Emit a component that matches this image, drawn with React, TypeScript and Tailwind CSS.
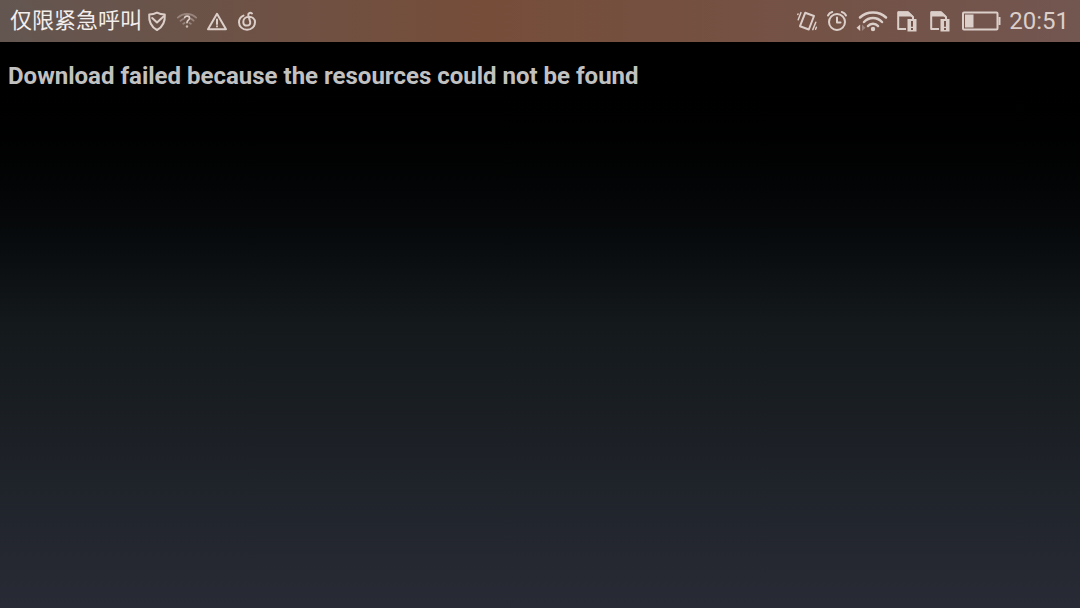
import type { ReactNode } from 'react';

interface GlyphProps {
    label:     string;
    width:     number;
    className?: string;
    children:  ReactNode;
}

// Every status glyph is drawn on a 24px high canvas so they share one baseline.
function Glyph({ label, width, className, children }: GlyphProps) {
    return (
        <svg
            role="img"
            aria-label={label}
            width={width}
            height={24}
            viewBox={`0 0 ${width} 24`}
            fill="none"
            stroke="currentColor"
            strokeWidth={2}
            strokeLinecap="round"
            strokeLinejoin="round"
            className={`shrink-0 ${className ?? ''}`}
        >
            {children}
        </svg>
    );
}

function ShieldGlyph() {
    return (
        <Glyph label="Protection" width={22}>
            <path d="M11 3.6C8.5 4.9 6 5.4 3.2 5.5C2.7 12.500 5 17.800 11 21C17 17.800 19.300 12.500 18.800 5.500C16 5.400 13.500 4.900 11 3.600Z" />
            <path d="M6.200 9L11 13.500L17.800 7.200" />
        </Glyph>
    );
}

function UnknownWifiGlyph() {
    return (
        <Glyph label="Unknown network" width={22}>
            <g opacity={0.4} strokeWidth={1.8}>
                <path d="M1.800 8.600C4.300 6.300 7.500 5 11 5C14.500 5 17.700 6.300 20.200 8.600" />
                <path d="M4.500 11.800C5.700 10.700 6.800 10 8 9.600M14.500 9.600C15.700 10 16.600 10.700 17.600 11.700" />
                <path d="M7.300 14.800L8.600 13.900M14.800 14.800L13.400 13.900" />
            </g>
            <path d="M8.700 8.500C9.200 6.600 13.600 6.600 13.500 9.200C13.400 11.200 11 11.200 11 13.600" strokeWidth={1.7} />
            <circle cx="11" cy="17.500" r="1.200" fill="currentColor" stroke="none" opacity={0.8} />
        </Glyph>
    );
}

function WarningGlyph() {
    return (
        <Glyph label="Warning" width={22}>
            <path d="M11 4.800L20 20.200H2Z" />
            <path d="M11 10.500V15M11 17.300V17.600" />
        </Glyph>
    );
}

function MusicGlyph() {
    return (
        <Glyph label="Music" width={22}>
            <path d="M7.500 6.600C4.700 7.800 3 10.300 3 13.200C3 17.500 6.600 20.800 11 20.800C15.500 20.800 19 17.500 19 13.200C19 9.900 16.300 7.700 13 7.700C9.600 7.700 7.300 10 7.300 12.900C7.300 15.200 8.900 16.600 11 16.600C13.200 16.600 14.600 15 14.200 12.900L12.300 6.300C11.900 4.200 14 3 16 4.500" />
        </Glyph>
    );
}

function VibrateGlyph() {
    return (
        <Glyph label="Vibrate" width={22}>
            <path d="M9.200 3.800L18 7L12.800 20.500L4 17.200Z" />
            <path d="M5 3.600L2.200 10.800M2 5L1.800 5.600M19.800 13.200L16.800 20.600M20.400 18.200L19.600 20.200" strokeWidth={1.500} />
        </Glyph>
    );
}

function AlarmGlyph() {
    return (
        <Glyph label="Alarm" width={22}>
            <circle cx="11" cy="13" r="8" />
            <path d="M11 8.500V13.500H14.500" />
            <path d="M2 6.500C2.800 4.700 4.300 3.500 6.200 3M20 6.500C19.200 4.700 17.700 3.500 15.800 3" />
        </Glyph>
    );
}

function WifiGlyph() {
    return (
        <Glyph label="Wi-Fi" width={32}>
            <g strokeWidth={2.500}>
                <path d="M4 8.500C7.500 5 11.800 3.400 17 3.400C22.200 3.400 26.500 5 30 8.500" />
                <path d="M8 13C10.500 10.400 13.500 9.100 17 9.100C20.500 9.100 23.500 10.400 26 13" />
                <path d="M12 17C13.300 15.500 15 14.800 17 14.800C19 14.800 20.700 15.500 22 17" />
            </g>
            <circle cx="17" cy="20" r="2.200" fill="currentColor" stroke="none" />
            <path d="M4.200 15.500V22L0.500 18.700Z" fill="currentColor" stroke="none" />
            <path d="M6 15.500V22L9.500 18.700Z" fill="currentColor" stroke="none" opacity={0.4} />
        </Glyph>
    );
}

function SimAlertGlyph() {
    return (
        <Glyph label="SIM card unavailable" width={25}>
            <path d="M10 20H2.200V3.200H12L17 8V10" strokeLinecap="butt" />
            <path d="M2 2.500H12L17.500 7.500H2Z" fill="currentColor" stroke="none" />
            <path
                d="M11.500 10H20.500V22.500H11.500ZM15 12V17.800H17V12ZM15 19V21H17V19Z"
                fill="currentColor"
                fillRule="evenodd"
                strokeWidth={0}
            />
        </Glyph>
    );
}

function BatteryGlyph() {
    return (
        <Glyph label="Battery low" width={39}>
            <rect x="1" y="3.500" width="34.500" height="17" rx="1" />
            <rect x="3" y="5.500" width="8.500" height="13" fill="currentColor" stroke="none" />
            <path d="M37.500 8V16" strokeLinecap="butt" />
        </Glyph>
    );
}

function StatusBar() {
    return (
        <header className="flex h-[42px] shrink-0 items-center justify-between bg-linear-to-r from-[#635651] via-[#764d39] via-45% to-[#725650] pr-[11px] pl-[10px] text-[#dccfca]">
            <div className="flex items-center gap-1">
                <span className="text-[22px] leading-6 text-[#f3eeec]">仅限紧急呼叫</span>
                <div className="flex items-center gap-2">
                    <ShieldGlyph />
                    <UnknownWifiGlyph />
                    <WarningGlyph />
                    <MusicGlyph />
                </div>
            </div>
            <div className="flex items-center gap-2">
                <VibrateGlyph />
                <AlarmGlyph />
                <WifiGlyph />
                <SimAlertGlyph />
                <SimAlertGlyph />
                <BatteryGlyph />
                <time className="text-[24px] leading-6">20:51</time>
            </div>
        </header>
    );
}

export default function App() {
    return (
        <div className="flex min-h-screen flex-col bg-black font-[Roboto,'Noto_Sans_CJK_SC',sans-serif]">
            <StatusBar />
            <main className="flex-1 bg-linear-to-b from-black via-[#14191c] via-50% to-[#282b35] px-2 py-5">
                <h1 className="text-[24px] leading-7 font-bold text-[#c1c1c1]">
                    Download failed because the resources could not be found
                </h1>
            </main>
        </div>
    );
}
